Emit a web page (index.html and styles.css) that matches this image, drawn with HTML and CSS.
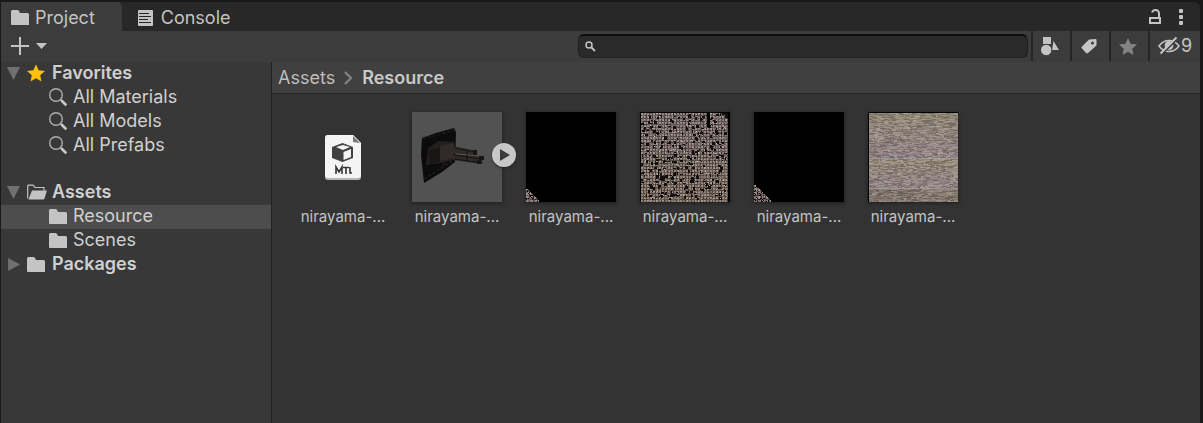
FILE: index.html
```html
<!DOCTYPE html>
<html lang="en">
<head>
<meta charset="utf-8">
<title>Project</title>
<link rel="stylesheet" href="styles.css">
</head>
<body>
<svg class="defs" aria-hidden="true">
  <symbol id="folder" viewBox="0 0 18 15"><path fill="#c4c4c4" d="M0 1.5Q0 0 1.5 0H6.500Q7.500 0 8 1L9 3H16.500Q18 3 18 4.500V15H1Q0 15 0 14Z"/></symbol>
  <symbol id="lens" viewBox="0 0 18 18"><circle cx="7" cy="7" r="6.300" fill="none" stroke="#adadad" stroke-width="1.400"/><path d="M11.500 11.500L13.500 13.500" stroke="#adadad" stroke-width="1.200"/><path d="M13 13L16.500 16.500" stroke="#c4c4c4" stroke-width="2.800" stroke-linecap="round"/></symbol>
</svg>
<main class="window">
  <header class="tabs" role="tablist">
    <button class="tab active" role="tab" aria-selected="true"><svg class="ic-folder" aria-hidden="true"><use href="#folder"/></svg>Project</button>
    <button class="tab" role="tab" aria-selected="false"><svg width="16" height="16" viewBox="0 0 16 16" aria-hidden="true"><rect width="15" height="16" rx="1" fill="#c4c4c4"/><path d="M1 3.500H11M1 6.500H13M1 9.500H10M1 12.500H13" stroke="#282828" stroke-width="1.200"/></svg>Console</button>
    <div class="window-tools">
      <button class="plain" aria-label="Lock"><svg width="13" height="16" viewBox="0 0 13 16"><path d="M1 9H11V14H1Z" fill="none" stroke="#c4c4c4" stroke-width="2"/><path d="M10 9V4Q9.500 1 6.500 1Q4 1 3 3.500" fill="none" stroke="#c4c4c4" stroke-width="2"/></svg></button>
      <button class="plain" aria-label="Menu"><svg width="4" height="16" viewBox="0 0 4 16" fill="#c4c4c4"><rect y="0" width="4" height="4" rx="1"/><rect y="6" width="4" height="4" rx="1"/><rect y="12" width="4" height="4" rx="1"/></svg></button>
    </div>
  </header>
  <div class="toolbar">
    <button class="plain create" aria-label="Create"><svg width="36" height="18" viewBox="0 0 36 18"><path d="M9 0V18M0 9H18" stroke="#c4c4c4" stroke-width="2"/><path d="M25 6H36L30.500 12Z" fill="#c4c4c4"/></svg></button>
    <label class="search"><svg width="11" height="11" viewBox="0 0 11 11"><circle cx="4" cy="4" r="3" fill="none" stroke="#c4c4c4" stroke-width="1.500"/><path d="M6 6L10 10" stroke="#c4c4c4" stroke-width="1.800"/></svg><input type="text" aria-label="Search"></label>
    <div class="filters">
      <button class="filter" aria-label="Search by type"><svg width="18" height="20" viewBox="0 0 18 20" fill="#c4c4c4"><path d="M2 1H10V8H2ZM12.500 5L18 14H11Z"/><circle cx="5.200" cy="14" r="5.700" stroke="#3c3c3c"/></svg></button>
      <button class="filter" aria-label="Search by label"><svg width="16" height="16" viewBox="0 0 16 16"><path fill="#c4c4c4" fill-rule="evenodd" d="M8 1.500L14.500 1Q15.500 1 15.500 2V7.500L7 15Q6 15.800 5 15L.600 10Q0 9.300 1 8.400ZM11.500 3.500A1.500 1.500 0 1 0 11.500 6.500A1.500 1.500 0 1 0 11.500 3.500Z"/></svg></button>
      <button class="filter" aria-label="Favorite"><svg width="18" height="17" viewBox="0 0 18 17"><path fill="#838383" d="M9 0L11.600 5.800L18 6.500L13.200 10.800L14.500 17L9 13.800L3.500 17L4.800 10.800L0 6.500L6.400 5.800Z"/></svg></button>
      <button class="filter hidden-count" aria-label="9 hidden packages"><svg width="22" height="18" viewBox="0 0 22 18" fill="none" stroke="#c4c4c4"><path d="M1 9Q5 3.500 11 3.500T21 9Q17 14.500 11 14.500T1 9Z" stroke-width="1.600"/><circle cx="11" cy="8.500" r="4" fill="#c4c4c4"/><path d="M4 17L20 1" stroke="#3c3c3c" stroke-width="2"/><path d="M2.500 16.500L18.500 .500" stroke-width="2"/></svg>9</button>
    </div>
  </div>
  <div class="body">
    <nav class="tree" aria-label="Project folders">
      <a class="row root" href="#"><svg class="arrow" viewBox="0 0 12 12"><path d="M0 0H12L6 12Z"/></svg><svg class="tree-icon" viewBox="0 0 18 17"><path fill="#ffc107" d="M9 0L11.600 5.800L18 6.500L13.200 10.800L14.500 17L9 13.800L3.500 17L4.800 10.800L0 6.500L6.400 5.800Z"/></svg>Favorites</a>
      <a class="row child" href="#"><svg class="tree-icon"><use href="#lens"/></svg>All Materials</a>
      <a class="row child" href="#"><svg class="tree-icon"><use href="#lens"/></svg>All Models</a>
      <a class="row child" href="#"><svg class="tree-icon"><use href="#lens"/></svg>All Prefabs</a>
      <a class="row root group" href="#"><svg class="arrow" viewBox="0 0 12 12"><path d="M0 0H12L6 12Z"/></svg><svg class="tree-icon open" viewBox="0 0 20 15"><path d="M.700 14V1.500Q.700 .700 1.500 .700H6L8 3H17V6" fill="none" stroke="#c4c4c4" stroke-width="1.200"/><path fill="#c4c4c4" d="M5 6H20L17.500 14Q17.200 15 16 15H1.500Z"/></svg>Assets</a>
      <a class="row child selected" href="#" aria-current="true"><svg class="tree-icon folder" viewBox="0 0 18 15"><use href="#folder"/></svg>Resource</a>
      <a class="row child" href="#"><svg class="tree-icon folder" viewBox="0 0 18 15"><use href="#folder"/></svg>Scenes</a>
      <a class="row root" href="#"><svg class="arrow" viewBox="0 0 12 12"><path d="M1 0L12 6L1 12Z"/></svg><svg class="tree-icon folder" viewBox="0 0 18 15"><use href="#folder"/></svg>Packages</a>
    </nav>
    <section class="content">
      <div class="crumbs"><a href="#">Assets</a><svg width="9" height="14" viewBox="0 0 9 14"><path d="M1 1L7 7L1 13" fill="none" stroke="#838383" stroke-width="2.200"/></svg><a class="current" href="#">Resource</a></div>
      <div class="assets">
        <figure class="asset"><div class="thumb bare"><svg width="36" height="45" viewBox="0 0 36 45"><path fill="#b5b5b5" d="M3 0H28L36 8V42Q36 45 33 45H3Q0 45 0 42V3Q0 0 3 0Z"/><path fill="#f4f4f4" d="M3 0H28L36 8V40Q36 43 33 43H3Q0 43 0 40V3Q0 0 3 0Z"/><path fill="#777" d="M28 1V7L35 8Z"/><path fill="#414141" d="M17.500 8L28 12V23L17.500 27L7 23V12Z"/><path fill="#f4f4f4" d="M11 12L18 10L25 12L18 15ZM18.500 17L26 14V22L18.500 25Z"/><path d="M11 39V32L14 37L17 32V39M18 32.500H24M21 32V39M25 32V38H27" fill="none" stroke="#343434" stroke-width="1.600"/></svg></div><figcaption>nirayama-...</figcaption></figure>
        <figure class="asset"><div class="thumb model"><svg width="90" height="90" viewBox="0 0 90 90">
          <path fill="#0c0b0b" d="M10 26L24 21L42 16L44 20L43 50L30 60L12 71L9 43Z"/><path d="M11 27L43 18M12 67L42 48" stroke="#1c1a1a" stroke-width="2" stroke-dasharray="3 2"/><path fill="#231f1f" d="M16 36L27 29L42 30V48L29 51L14 53Z"/><path fill="#302a2a" d="M28 34L42 31V46L28 49Z"/><path fill="#191616" d="M17 38L28 35V49L17 53Z"/><path fill="#2f2928" d="M41 34L64 39V43L41 41ZM41 42L71 45L70 52L41 48Z"/><path d="M43 36L64 40M42 43L70 47M42 47L70 51M55 39V50" stroke="#161313" stroke-width="1"/><path fill="#181515" d="M61 38H65V43H61ZM67 44H72V48H67ZM65 48H69V52H65ZM30 50H34V54H30Z"/></svg><button class="play" aria-label="Show model contents"><svg width="24" height="24" viewBox="0 0 24 24"><circle cx="12" cy="12" r="12" fill="#c8c8c8"/><path fill="#3b3b3b" d="M8 6L18 12L8 18Z"/></svg></button></div><figcaption>nirayama-...</figcaption></figure>
        <figure class="asset"><div class="thumb"><canvas width="90" height="90" data-kind="corner" data-size="13"></canvas></div><figcaption>nirayama-...</figcaption></figure>
        <figure class="asset"><div class="thumb"><canvas width="90" height="90" data-kind="mesh"></canvas></div><figcaption>nirayama-...</figcaption></figure>
        <figure class="asset"><div class="thumb"><canvas width="90" height="90" data-kind="corner" data-size="17"></canvas></div><figcaption>nirayama-...</figcaption></figure>
        <figure class="asset"><div class="thumb"><canvas width="90" height="90" data-kind="strata"></canvas></div><figcaption>nirayama-...</figcaption></figure>
      </div>
    </section>
  </div>
</main>
<script src="textures.js"></script>
</body>
</html>
```
FILE: styles.css
```css
* { box-sizing: border-box; }
body { margin: 0; background: #191919; color: #d0d0d0; font: 18px/24px Inter, "Liberation Sans", sans-serif; }
button { border: 0; margin: 0; padding: 0; background: none; color: inherit; font: inherit; }
a { color: inherit; text-decoration: none; }
svg { display: block; flex: none; }
.defs { position: absolute; width: 0; height: 0; }
.window { min-height: 100vh; display: flex; flex-direction: column; padding: 2px 3px 0 1px; }
.tabs { display: flex; height: 29px; background: #282828; border-radius: 0 6px 0 0; color: #c4c4c4; }
.tab { display: flex; align-items: center; gap: 7px; padding: 2px 16px 0; }
.tab.active { gap: 6px; background: #3c3c3c; padding: 2px 27px 0 10px; border-radius: 0 5px 0 0; }
.ic-folder { width: 18px; height: 15px; }
.window-tools { display: flex; align-items: center; gap: 17px; margin-left: auto; padding-right: 17px; }
.toolbar { display: flex; align-items: flex-start; height: 31px; background: #3c3c3c; }
.create { padding: 6px 10px; }
.search { display: flex; align-items: center; gap: 6px; width: 450px; height: 24px; margin: 3px 3px 0 auto; padding: 0 6px; background: #2a2a2a; border: 1px solid #212121; border-top: 2px solid #0d0d0d; border-radius: 6px; }
.search input { flex: 1; min-width: 0; border: 0; outline: 0; background: none; color: inherit; font: inherit; }
.filters { display: flex; height: 30px; }
.filter { display: flex; align-items: center; justify-content: center; width: 39px; padding-right: 3px; border-left: 2px solid #252525; }
.hidden-count { width: 52px; gap: 1px; padding: 0; color: #c4c4c4; }
.body { display: flex; flex: 1; }
.tree { flex: 0 0 270px; background: #383838; }
.row { display: flex; align-items: center; gap: 7px; height: 24px; padding-bottom: 2px; }
.root { padding-left: 6px; font-weight: 600; }
.child { gap: 6px; padding-left: 48px; }
.group { margin-top: 23px; }
.selected { background: #4d4d4d; }
.arrow { width: 13px; height: 13px; fill: #707070; }
.tree-icon { width: 18px; height: 18px; }
.folder { height: 15px; }
.open { width: 20px; margin-right: -2px; }
.content { flex: 1; min-width: 0; background: #333; border-left: 1px solid #212121; }
.crumbs { display: flex; align-items: center; gap: 9px; height: 32px; padding-left: 6px; background: #404040; border-bottom: 1px solid #242424; color: #bdbdbd; }
.current { font-weight: 600; color: #c8c8c8; }
.assets { display: flex; flex-wrap: wrap; gap: 24px; padding: 18px 26px; }
.asset { width: 90px; margin: 0; text-align: center; font-size: 15px; color: #c4c4c4; }
.thumb { position: relative; display: flex; align-items: center; justify-content: center; height: 90px; background: #000; box-shadow: 0 1px 3px 1px #252525; }
.thumb.bare { background: none; box-shadow: none; }
.thumb.model { background: #525252; }
.thumb canvas { display: block; }
.play { position: absolute; right: -14px; top: 31px; border-radius: 50%; box-shadow: 0 1px 2px #222; }
figcaption { margin-top: 3px; white-space: nowrap; }
```
FILE: textures.js
```js
let seed = 7919;
function rnd() {
  seed = (seed + 0x6d2b79f5) | 0;
  let t = Math.imul(seed ^ (seed >>> 15), 1 | seed);
  t = (t + Math.imul(t ^ (t >>> 7), 61 | t)) ^ t;
  return ((t ^ (t >>> 14)) >>> 0) / 4294967296;
}
function tone(ctx, r, g, b, x, y, w, h) {
  ctx.fillStyle = `rgb(${r | 0},${g | 0},${b | 0})`;
  ctx.fillRect(x, y, w, h);
}
for (const canvas of document.querySelectorAll("canvas")) {
  const ctx = canvas.getContext("2d");
  const kind = canvas.dataset.kind;
  tone(ctx, 0, 0, 0, 0, 0, 90, 90);
  if (kind === "corner") {
    const size = Number(canvas.dataset.size);
    for (let y = 90 - size; y < 90; y++) {
      for (let x = 0; x < size; x++) {
        if (x <= y - 89 + size && rnd() > 0.15) {
          const dark = x % 4 === 3 || y % 4 === 3;
          const v = (dark ? 35 : 95) + rnd() * 75;
          tone(ctx, v + 8, v - 6, v - 8, x, y, 1, 1);
        }
      }
    }
  } else if (kind === "mesh") {
    for (let y = 1; y < 90; y++) {
      for (let x = 1; x < 88; x++) {
        const grid = x % 3 === 0 || y % 3 === 0;
        const v = (grid ? 48 : 102) + rnd() * 60;
        const warm = y / 90 * 12;
        tone(ctx, v + 12, v, v + 1 - warm, x, y, 1, 1);
      }
    }
    for (let i = 0; i < 330; i++) {
      const x = 1 + rnd() * 85 | 0;
      const y = 1 + rnd() * 86 | 0;
      tone(ctx, 18, 15, 14, x, y, 1 + rnd() * 3 | 0, 1 + rnd() * 3 | 0);
    }
    for (let i = 0; i < 60; i++) {
      const v = 165 + rnd() * 35;
      tone(ctx, v, v - 4, v - 6, 1 + rnd() * 85 | 0, 1 + rnd() * 86 | 0, 1, 1);
    }
    tone(ctx, 0, 0, 0, 67, 1, 3, 14);
  } else {
    for (let y = 1; y < 90; y++) {
      const wave = y < 46 ? y / 46 : y < 77 ? (y - 46) / 31 : 0.35;
      const dim = y > 76 ? 12 : 0;
      let x = 1;
      while (x < 90) {
        const w = Math.min(90 - x, 1 + rnd() * 5 | 0);
        const v = 104 + rnd() * 54 - dim;
        const tint = (rnd() - 0.5) * 8;
        tone(ctx, v + 12 + tint, v + 3 - wave * 6, v - 14 + wave * 15 - tint, x, y, w, 1);
        x += w;
      }
    }
    for (const y of [46, 76]) {
      for (let x = 1; x < 90; x++) {
        const v = 135 + rnd() * 40;
        tone(ctx, v, v, v - 8, x, y, 1, 1);
      }
    }
  }
}
```
